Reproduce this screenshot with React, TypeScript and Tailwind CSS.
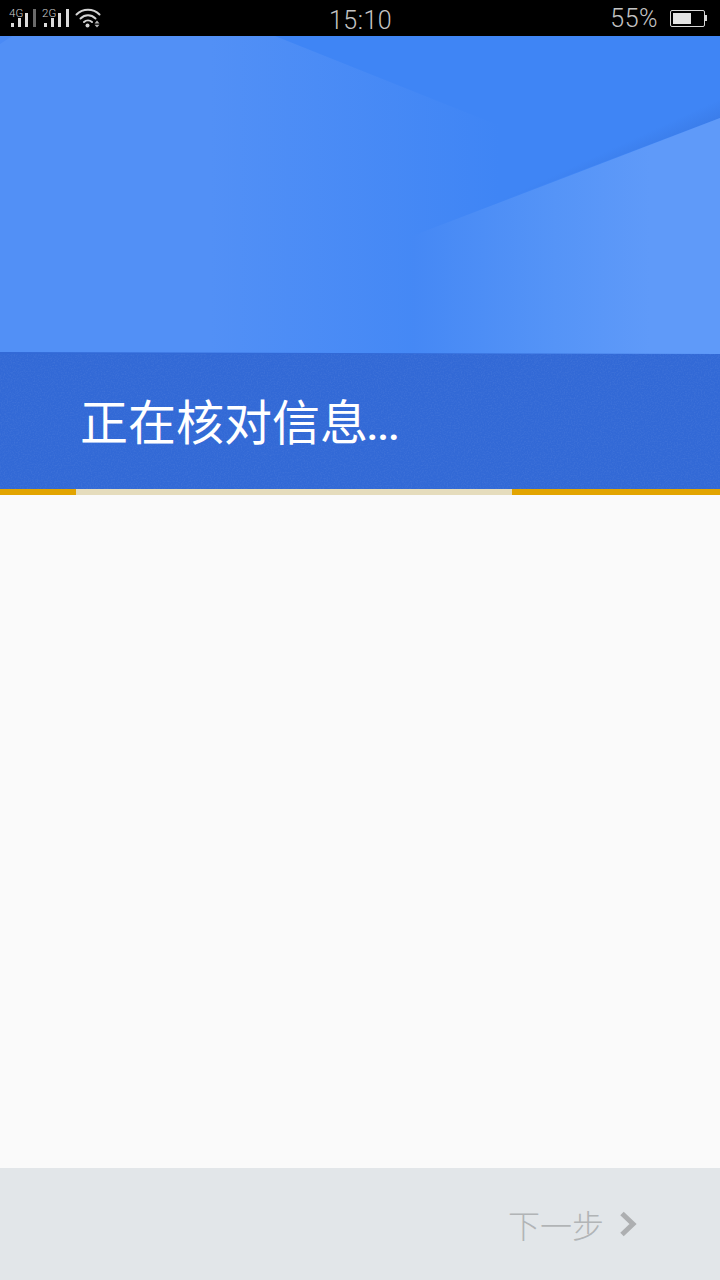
const cjk = "font-['Noto_Sans_CJK_SC','Noto_Sans',sans-serif]";

function Signal({ label, lastBar }: { label: string; lastBar: string }) {
  return (
    <svg width="29" height="28" viewBox="0 -4 29 28" className="block">
      <text x="0" y="8.500" fontSize="11.500" fill="#cfcfcf" fontFamily="Roboto, sans-serif">
        {label}
      </text>
      <rect x="2" y="15" width="3" height="4" fill="#dcdcdc" />
      <rect x="9" y="10" width="3" height="9" fill="#dcdcdc" />
      <rect x="16" y="5" width="3" height="14" fill="#dcdcdc" />
      <rect x="24" y="1" width="3" height="18" fill={lastBar} />
    </svg>
  );
}

function StatusBar() {
  return (
    <div className="h-9 shrink-0 bg-black relative flex items-center pl-[9px] pr-[13px] text-[#c4c4c4] font-['Roboto',sans-serif] font-light">
      <div className="flex items-center gap-[4px]">
        <Signal label="4G" lastBar="#6a6a6a" />
        <Signal label="2G" lastBar="#dcdcdc" />
        <svg width="26" height="20" viewBox="0 0 26 20" className="block">
          <g fill="none" stroke="#d4d4d4" strokeWidth="2" strokeLinecap="round">
            <path d="M1.500 6.500C8 .2 18 .2 24.500 6.500" />
            <path d="M5.500 10.500C10 6.300 16 6.300 20.500 10.500" />
            <path d="M9 14C11.300 12 14.700 12 17 14" />
          </g>
          <circle cx="12.500" cy="17.500" r="2" fill="#d4d4d4" />
          <path d="M19.500 15.500l2.500-3 2.500 3zM19.500 16.800h5l-2.500 2.700z" fill="#b8b8b8" />
        </svg>
      </div>
      <span className="absolute left-[329px] top-[4px] text-[25px] leading-[33px] tracking-[0.5px]">15:10</span>
      <div className="ml-auto flex items-center">
        <span className="text-[25px] leading-[33px] mt-[1px] tracking-[0.5px]">55%</span>
        <div className="ml-3 w-[35px] h-[17px] border border-[#d8d8d8] rounded-[2px] p-[2px]">
          <div className="h-full w-[18px] bg-[#e4e4e4]" />
        </div>
        <div className="w-[2px] h-[6px] bg-[#d8d8d8]" />
      </div>
    </div>
  );
}

function HeroArt() {
  return (
    <svg width="720" height="318" viewBox="0 0 720 318" className="block shrink-0">
      <defs>
        <linearGradient id="base" x1="210" y1="0" x2="500" y2="0" gradientUnits="userSpaceOnUse">
          <stop offset="0" stopColor="#5290f6" />
          <stop offset="1" stopColor="#3f85f5" />
        </linearGradient>
        <linearGradient id="light" x1="412" y1="0" x2="650" y2="0" gradientUnits="userSpaceOnUse">
          <stop offset="0" stopColor="#4588f5" />
          <stop offset="0.6" stopColor="#5594f7" />
          <stop offset="1" stopColor="#5f9af9" />
        </linearGradient>
        <linearGradient id="dark" x1="720" y1="63" x2="727.200" y2="78.700" gradientUnits="userSpaceOnUse">
          <stop offset="0" stopColor="#3f85f5" />
          <stop offset="1" stopColor="#3b7dea" />
        </linearGradient>
      </defs>
      <rect width="720" height="318" fill="url(#base)" />
      <path d="M0 8V0h12z" fill="#4a8af5" />
      <path d="M275 0H720V82L500 165V90z" fill="url(#dark)" />
      <path d="M720 82L412 200V318H720z" fill="url(#light)" />
      <path d="M0 316L720 318H0z" fill="#3269d6" />
    </svg>
  );
}

export default function App() {
  return (
    <div className={`w-[720px] h-[1280px] flex flex-col bg-[#fafafa] overflow-hidden ${cjk}`}>
      <StatusBar />
      <HeroArt />
      <div className="relative h-[135px] shrink-0 bg-[#3269d6] pl-[80px] pt-[33px] text-white text-[48px] leading-[64px]">
        <svg width="720" height="135" className="absolute inset-0">
          <filter id="speck">
            <feTurbulence type="fractalNoise" baseFrequency="0.7" numOctaves="2" />
            <feColorMatrix values="0 0 0 0 1  0 0 0 0 1  0 0 0 0 1  0.5 0 0 0 -0.2" />
          </filter>
          <rect width="720" height="135" filter="url(#speck)" opacity="0.25" />
        </svg>
        <span className="relative">
          正在核对信息<span className="font-['Roboto',sans-serif] font-bold text-[37px] -ml-[1px]">...</span>
        </span>
      </div>
      <div className="h-[6px] shrink-0 flex">
        <div className="w-[76px] bg-[#e2a400]" />
        <div className="w-[436px] bg-[#e5dcbc]" />
        <div className="flex-1 bg-[#e2a400]" />
      </div>
      <div className="flex-1" />
      <div className="h-[112px] shrink-0 bg-[#e2e6e9] flex items-center justify-end pr-[83px]">
        <span className="text-[32px] leading-[44px] text-[#b1b4b6] font-light">下一步</span>
        <svg width="18" height="26" viewBox="0 0 18 26" className="ml-[15px]">
          <path d="M3 2.500L14 13 3 23.500" fill="none" stroke="#adafb1" strokeWidth="5" />
        </svg>
      </div>
    </div>
  );
}
